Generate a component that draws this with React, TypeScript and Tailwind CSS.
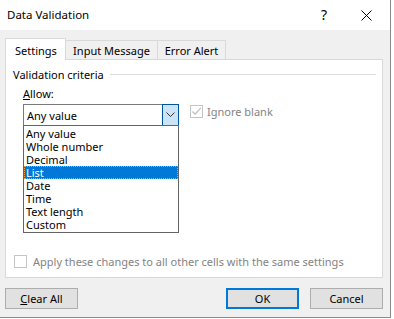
import React from 'react';

const options = ['Any value', 'Whole number', 'Decimal', 'List', 'Date', 'Time', 'Text length', 'Custom'];

function Check({ disabled }: { disabled?: boolean }) {
  return (
    <span className="w-[13px] h-[13px] border border-[#c5c5c5] bg-white flex items-center justify-center shrink-0">
      {disabled && (
        <svg width="11" height="11" viewBox="0 0 11 11">
          <path d="M1.5 5.5 L4.2 8.2 L9.8 1.8" fill="none" stroke="#bcbcbc" strokeWidth="1.2" />
        </svg>
      )}
    </span>
  );
}

export default function App() {
  return (
    <div className="w-[394px] h-[319px] bg-white text-[11px] leading-[13px] text-black font-['Segoe_UI','Noto_Sans',sans-serif]">
      <div className="w-[391px] h-[318px] border-r border-b border-[#8a8a8a] flex flex-col">
        {/* Title bar */}
        <div className="h-[30px] bg-white flex items-center pl-[7px] pr-[18px] shrink-0">
          <span className="flex-1 pb-[2px] text-[11.5px]">Data Validation</span>
          <span className="text-[14px] mr-[34px] pb-[2px]">?</span>
          <svg width="11" height="11" viewBox="0 0 11 11">
            <path d="M0.5 0.5 L10.5 10.5 M10.5 0.5 L0.5 10.5" stroke="#000" strokeWidth="1" />
          </svg>
        </div>

        {/* Body */}
        <div className="flex-1 bg-[#f0f0f0] pl-[5px] pr-[7px] pt-[7px] flex flex-col">
          {/* Tabs */}
          <div className="flex items-end h-[22px]">
            <div className="relative z-10 h-[22px] w-[61px] bg-white border border-b-0 border-[#d9d9d9] flex items-center pl-[9px] pt-[1px] -mb-px">
              Settings
            </div>
            <div className="h-[19px] w-[92px] border border-l-0 border-b-0 border-[#d9d9d9] flex items-center justify-center">
              Input Message
            </div>
            <div className="h-[19px] w-[68px] border border-l-0 border-b-0 border-[#d9d9d9] flex items-center justify-center">
              Error Alert
            </div>
          </div>

          {/* Panel */}
          <div className="h-[219px] bg-white border border-[#d9d9d9] flex flex-col pl-[7px] pt-[8px]">
            <div className="flex items-center gap-[6px] pr-[6px]">
              <span>Validation criteria</span>
              <span className="flex-1 h-px bg-[#dcdcdc]" />
            </div>
            <div className="pl-[10px] mt-[6px]">
              <span>
                <span className="underline">A</span>llow:
              </span>
            </div>
            <div className="flex items-start pl-[10px] mt-[4px]">
              <div className="relative">
                <div className="w-[156px] h-[22px] border border-[#7a7a7a] flex items-stretch">
                  <span className="flex-1 flex items-center pl-[3px]">Any value</span>
                  <span className="w-[17px] bg-[#cce4f7] border border-[#005499] -my-px -mr-px flex items-center justify-center">
                    <svg width="9" height="6" viewBox="0 0 9 6">
                      <path d="M0.5 0.5 L4.5 4.5 L8.5 0.5" fill="none" stroke="#333" strokeWidth="1" />
                    </svg>
                  </span>
                </div>
                {/* Open dropdown list */}
                <div className="absolute left-0 top-[21px] w-[156px] bg-white border border-[#646464] py-[1px] z-20 leading-[12px]">
                  {options.map((o) => (
                    <div
                      key={o}
                      className={
                        o === 'List'
                          ? 'h-[13px] flex items-center pl-[2px] bg-[#0078d7] text-white outline-1 outline-dotted outline-[#f0a040] -outline-offset-1'
                          : 'h-[13px] flex items-center pl-[2px]'
                      }
                    >
                      {o}
                    </div>
                  ))}
                </div>
              </div>
              <div className="flex items-center gap-[4px] ml-[11px] mt-[1px] text-[#838383]">
                <Check disabled />
                <span>Ignore blank</span>
              </div>
            </div>
            <div className="flex-1" />
            <div className="flex items-center gap-[6px] pl-[1px] mb-[9px] text-[#838383]">
              <Check />
              <span>Apply these changes to all other cells with the same settings</span>
            </div>
          </div>

          {/* Buttons */}
          <div className="flex mt-[10px]">
            <button className="w-[73px] h-[21px] bg-[#e1e1e1] border border-[#adadad] flex items-center justify-center">
              <span>
                <span className="underline">C</span>lear All
              </span>
            </button>
            <div className="flex-1" />
            <button className="w-[73px] h-[21px] bg-[#e1e1e1] border-2 border-[#0078d7] flex items-center justify-center">
              OK
            </button>
            <button className="w-[73px] h-[21px] ml-[11px] bg-[#e1e1e1] border border-[#adadad] flex items-center justify-center">
              Cancel
            </button>
          </div>
        </div>
      </div>
    </div>
  );
}
